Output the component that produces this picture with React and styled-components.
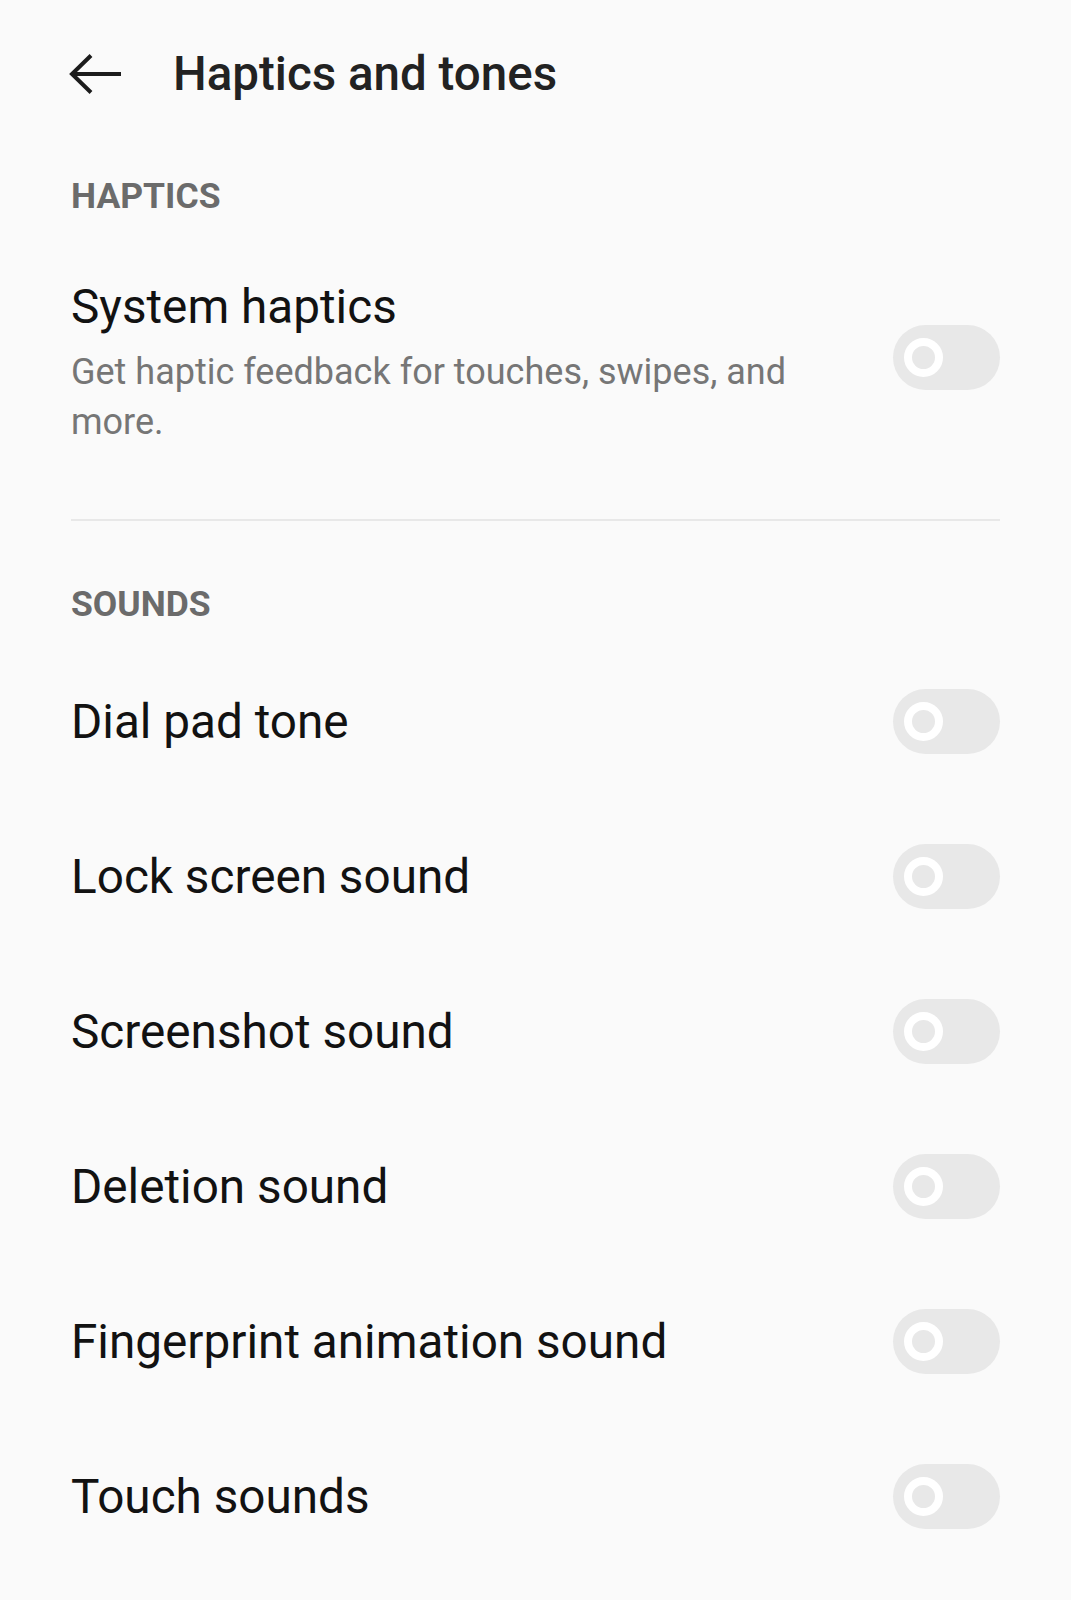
import React from 'react';
import styled, { createGlobalStyle } from 'styled-components';

const GlobalStyle = createGlobalStyle`
  html, body {
    margin: 0;
    padding: 0;
    background: #fafafa;
  }
  body {
    font-family: Roboto, 'Noto Sans', 'Liberation Sans', sans-serif;
    -webkit-font-smoothing: antialiased;
  }
`;

const Page = styled.div`
  min-height: 1600px;
  background: #fafafa;
  padding: 0 71px 0 71px;
  box-sizing: border-box;
`;

const Header = styled.header`
  height: 148px;
  display: flex;
  align-items: center;
  margin-left: -2px;
`;

const BackButton = styled.button`
  border: none;
  background: none;
  padding: 0;
  display: flex;
  align-items: center;
  color: #1c1c1c;
  cursor: pointer;
`;

const Title = styled.h1`
  margin: 0 0 0 52px;
  font-size: 47.5px;
  font-weight: 500;
  line-height: 56px;
  color: #222222;
`;

const SectionLabel = styled.div`
  margin-top: ${p => p.$top}px;
  font-size: 35.5px;
  font-weight: 700;
  line-height: 35px;
  color: #6b6b6b;
`;

const Row = styled.div`
  display: flex;
  justify-content: space-between;
  align-items: ${p => (p.$top ? 'flex-start' : 'center')};
  gap: 40px;
  height: ${p => (p.$top ? 'auto' : '155px')};
  padding: ${p => (p.$top ? '65px 0 72px' : '0')};
`;

const TextBlock = styled.div`
  max-width: 760px;
`;

const ItemTitle = styled.div`
  font-size: 47.7px;
  line-height: 56px;
  color: #121212;
`;

const ItemDesc = styled.div`
  margin-top: 12px;
  font-size: 36px;
  line-height: 50px;
  color: #767676;
`;

const Divider = styled.hr`
  margin: 0;
  border: none;
  height: 2px;
  background: #e8e8e8;
`;

const ListGap = styled.div`
  height: 22px;
`;

const Toggle = styled.span`
  position: relative;
  flex: none;
  display: block;
  width: 107px;
  height: 65px;
  border-radius: 33px;
  background: #e8e8e8;
  margin-top: ${p => p.$offset || 0}px;

  &::before {
    content: '';
    position: absolute;
    left: 11px;
    top: 50%;
    width: 23px;
    height: 23px;
    margin-top: -19.5px;
    border: 8px solid #ffffff;
    border-radius: 50%;
    background: #e8e8e8;
  }
`;

const BackArrow = () => (
  <svg width="52" height="40" viewBox="0 0 52 40" fill="none">
    <path
      d="M3 20 H52 M22 1.5 L3 20 L22 38.5"
      stroke="currentColor"
      strokeWidth="4"
      strokeLinecap="butt"
      strokeLinejoin="miter"
    />
  </svg>
);

const sounds = [
  'Dial pad tone',
  'Lock screen sound',
  'Screenshot sound',
  'Deletion sound',
  'Fingerprint animation sound',
  'Touch sounds',
];

const App = () => (
  <>
    <GlobalStyle />
    <Page>
      <Header>
        <BackButton aria-label="Back">
          <BackArrow />
        </BackButton>
        <Title>Haptics and tones</Title>
      </Header>

      <SectionLabel $top={31}>HAPTICS</SectionLabel>
      <Row $top>
        <TextBlock>
          <ItemTitle>System haptics</ItemTitle>
          <ItemDesc>Get haptic feedback for touches, swipes, and more.</ItemDesc>
        </TextBlock>
        <Toggle role="switch" aria-checked="false" $offset={46} />
      </Row>
      <Divider />

      <SectionLabel $top={66}>SOUNDS</SectionLabel>
      <ListGap />
      {sounds.map(name => (
        <Row key={name}>
          <ItemTitle>{name}</ItemTitle>
          <Toggle role="switch" aria-checked="false" />
        </Row>
      ))}
    </Page>
  </>
);

export default App;
